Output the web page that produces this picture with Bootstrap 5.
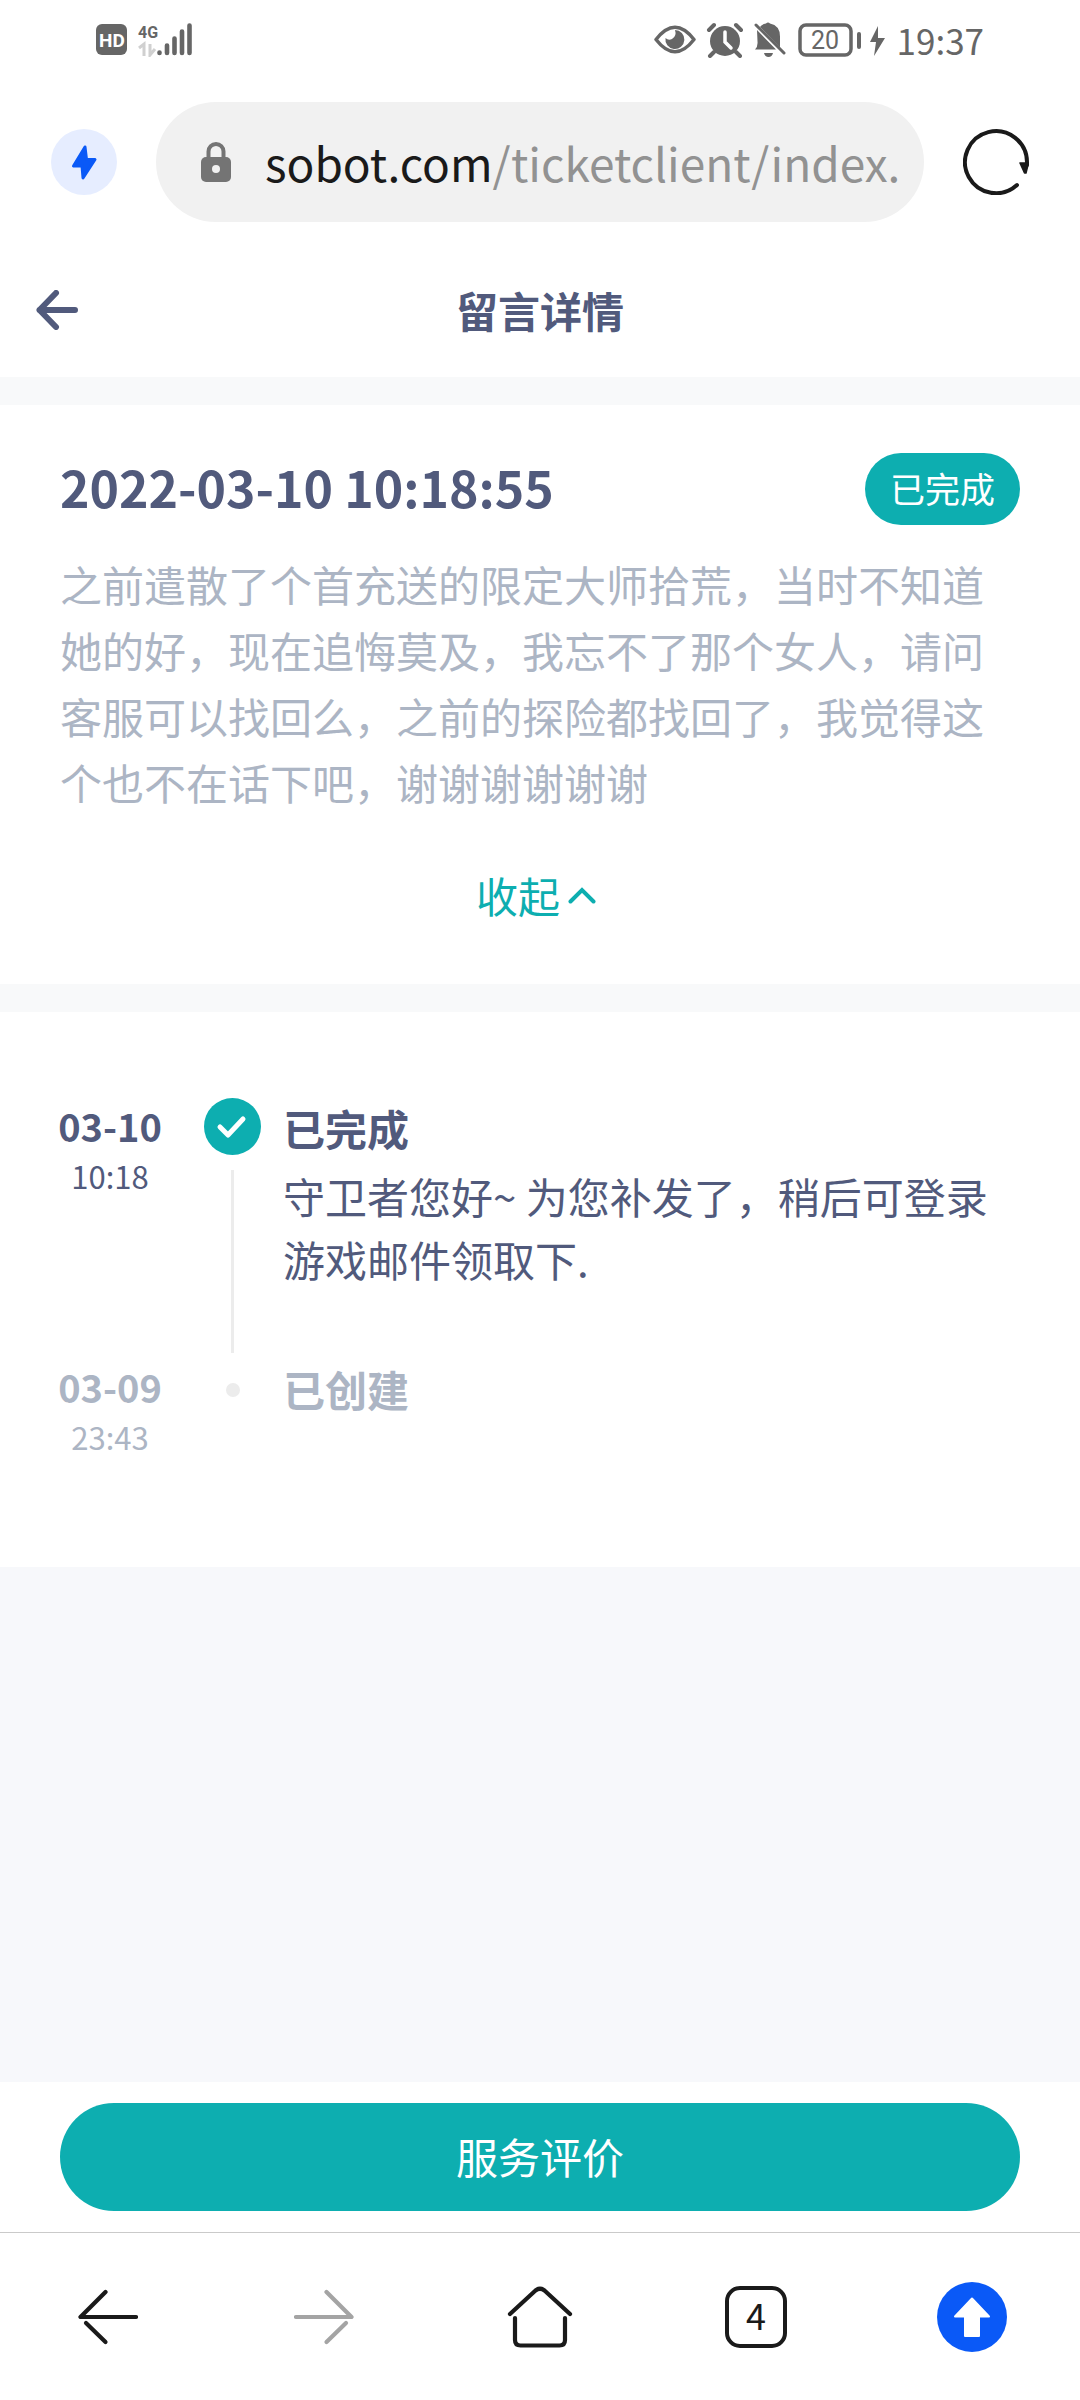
<!DOCTYPE html>
<html lang="zh-CN">
<head>
<meta charset="utf-8">
<meta name="viewport" content="width=device-width, initial-scale=1">
<title>留言详情</title>
<link href="https://cdn.jsdelivr.net/npm/bootstrap@5.3.0/dist/css/bootstrap.min.css" rel="stylesheet">
<style>
  :root { --ink: #515a7c; --muted: #acb5c4; --teal: #0daeb0; --chrome: #666; --band: #f8f9fa; }
  body { font-family: "Noto Sans CJK SC", "Noto Sans", sans-serif; font-size: 42px; line-height: 66px; color: var(--ink); }
  svg { display: block; flex-shrink: 0; }
  .btn { --bs-btn-padding-x: 0; --bs-btn-padding-y: 0; --bs-btn-border-width: 0; --bs-btn-font-size: 42px; --bs-btn-line-height: 66px; }
  .gutter { padding-left: 60px; padding-right: 60px; }
  .muted { color: var(--muted); }

  .status-bar { height: 80px; padding: 0 96px; color: var(--chrome); }
  .status-time { font-size: 35px; line-height: 44px; margin-left: 10px; }
  .address-bar { gap: 39px; padding: 22px 51px 23px; }
  .url-pill { height: 120px; background: #f1f1f1; padding: 0 20px 0 45px; gap: 34px; font-size: 46px; }
  .url-pill:hover { background: #f1f1f1; }
  .url-path { color: #929292; }
  .url-host { color: #1a1a1a; }

  .title-bar { padding: 32px 36px 34px; }
  .title-bar h1 { font-size: 42px; line-height: 66px; }
  .side-slot { width: 42px; }
  .band { height: 28px; background: var(--band); }

  .ticket { padding-top: 48px; padding-bottom: 56px; }
  .ticket h2 { font-size: 50px; line-height: 66px; }
  .state-pill { background: var(--teal); font-size: 35px; line-height: 70px; padding: 0 25px 2px; font-weight: 400; }
  .ticket-text { margin: 26px 0 47px; }
  .toggle-btn, .toggle-btn:hover { color: var(--teal); gap: 8px; }

  .timeline { padding: 86px 60px 108px 57px; }
  .when { width: 106px; margin-right: 41px; white-space: nowrap; }
  .when-date { font-size: 38px; line-height: 56px; }
  .when-time { font-size: 31px; line-height: 44px; }
  .rail { width: 57px; margin-right: 22px; }
  .rail-line { width: 3px; background: #ececec; margin: 15px 0 6px; }
  .rail-dot { width: 14px; height: 14px; background: #ececec; margin-top: 24px; }
  .step-title { font-size: 42px; line-height: 60px; margin-bottom: 6px; }
  .step-text { line-height: 63px; padding-bottom: 69px; }

  .filler { background: #f7f8fb; }
  .action-bar { padding-top: 21px; padding-bottom: 21px; }
  .rate-btn, .rate-btn:hover { background: var(--teal); color: #fff; height: 108px; padding-bottom: 2px; }
  .browser-nav { height: 168px; border-top: 1px solid #cacaca; }
</style>
</head>
<body class="bg-white">
<div class="d-flex flex-column min-vh-100">

  <div class="status-bar d-flex align-items-center justify-content-between">
    <svg width="98" height="34" viewBox="0 0 98 34" role="img" aria-label="HD 4G">
      <rect x="0" y="1" width="31" height="31" rx="6" fill="#666"/>
      <text x="16" y="24" text-anchor="middle" font-family="Roboto, sans-serif" font-weight="700" font-size="19" fill="#fff">HD</text>
      <text x="42" y="15" font-family="Roboto, sans-serif" font-weight="700" font-size="16" fill="#666">4G</text>
      <path d="M43 25l5-4v12M54 21v11l5-6" fill="none" stroke="#d0d0d0" stroke-width="3"/>
      <g stroke="#666" stroke-width="4.600" stroke-linecap="round">
        <path d="M63.500 29.500v.500M71 22.500V30M78.500 15.500V30M86 8.500V30M93.500 2.500V30"/>
      </g>
    </svg>
    <div class="d-flex align-items-center">
      <svg width="233" height="36" viewBox="0 0 233 36" role="img" aria-label="20%">
        <g fill="#666">
          <path d="M2 17.500Q21-7 40 17.500Q21 42 2 17.500Z" fill="none" stroke="#666" stroke-width="3.500" stroke-linejoin="round"/>
          <path d="M21 8a9.500 9.500 0 1 1-9.500 8q3 3 6.500 1q5-3 3-9z"/>
          <circle cx="71" cy="19" r="15"/>
          <path d="M55 8l5-5M87 8l-5-5M60 30l-4 4M82 30l4 4" stroke="#666" stroke-width="4" stroke-linecap="round"/>
          <path d="M71 10v10l6 6" fill="none" stroke="#fff" stroke-width="3.500" stroke-linecap="round"/>
          <path d="M106 5q2-3 6-3.500q2-2 4 0q10 2 10 13v11L106 5zM103 8l19 19.500H101q3-3 2.500-8zM110 31h9q-1 4-4.500 4t-4.500-4z"/>
          <path d="M102 3l28 28" stroke="#666" stroke-width="3" stroke-linecap="round"/>
          <rect x="146" y="3" width="51" height="30" rx="6" fill="none" stroke="#666" stroke-width="3.500"/>
          <rect x="203" y="10" width="4" height="17" rx="2"/>
          <path d="M224 4l-8 16h6l-2 14 11-18h-7z"/>
        </g>
        <text x="171" y="27" text-anchor="middle" font-family="Roboto, sans-serif" font-size="25" fill="#666">20</text>
      </svg>
      <span class="status-time">19:37</span>
    </div>
  </div>

  <div class="address-bar d-flex align-items-center">
    <button class="btn rounded-circle" type="button" aria-label="加速">
      <svg width="66" height="66" viewBox="0 0 66 66"><circle cx="33" cy="33" r="33" fill="#e6edff"/><path d="M34 18L22.500 37H31l1 12L44 30.500h-8.500z" fill="#0a59f7" stroke="#0a59f7" stroke-width="3" stroke-linejoin="round"/></svg>
    </button>
    <button class="url-pill btn rounded-pill flex-grow-1 d-flex align-items-center text-start overflow-hidden text-nowrap" type="button">
      <svg width="30" height="40" viewBox="0 0 30 40"><rect y="15" width="30" height="25" rx="5" fill="#747474"/><path d="M7.500 18V9.500a7.500 7.500 0 0 1 15 0V18" fill="none" stroke="#747474" stroke-width="4"/><circle cx="15" cy="27" r="4" fill="#f1f1f1"/></svg>
      <span><span class="url-host">sobot.com</span><span class="url-path">/ticketclient/index.</span></span>
    </button>
    <button class="btn rounded-circle" type="button" aria-label="刷新">
      <svg width="66" height="66" viewBox="0 0 66 66"><path d="M64 36V33A31 31 0 1 0 54 56" fill="none" stroke="#1a1a1a" stroke-width="4" stroke-linecap="round"/><path d="M57 34h8.500L63 44h-1.500z" fill="#1a1a1a" stroke="#1a1a1a" stroke-width="1.500" stroke-linejoin="round"/></svg>
    </button>
  </div>

  <header class="title-bar d-flex align-items-center justify-content-between">
    <button class="btn side-slot" type="button" aria-label="返回">
      <svg width="42" height="40" viewBox="0 0 42 40"><path d="M3.500 20H39M20 3L3.500 20 20 37" fill="none" stroke="#515a7c" stroke-width="6" stroke-linecap="round" stroke-linejoin="round"/></svg>
    </button>
    <h1 class="m-0 fw-bold">留言详情</h1>
    <span class="side-slot"></span>
  </header>

  <div class="band"></div>

  <section class="ticket gutter">
    <div class="d-flex align-items-start justify-content-between">
      <h2 class="m-0 fw-bold">2022-03-10 10:18:55</h2>
      <span class="state-pill badge rounded-pill">已完成</span>
    </div>
    <p class="ticket-text muted">之前遣散了个首充送的限定大师拾荒，当时不知道她的好，现在追悔莫及，我忘不了那个女人，请问客服可以找回么，之前的探险都找回了，我觉得这个也不在话下吧，谢谢谢谢谢谢</p>
    <button class="toggle-btn btn d-flex align-items-center mx-auto" type="button">收起
      <svg width="36" height="18" viewBox="0 0 36 18"><path d="M2.500 15.500L14 4l11.500 11.500" fill="none" stroke="#0daeb0" stroke-width="4" stroke-linecap="round"/></svg>
    </button>
  </section>

  <div class="band"></div>

  <section class="timeline">
    <div class="d-flex">
      <div class="when flex-shrink-0 text-center">
        <div class="when-date fw-bold">03-10</div>
        <div class="when-time">10:18</div>
      </div>
      <div class="rail flex-shrink-0 d-flex flex-column align-items-center">
        <svg width="57" height="57" viewBox="0 0 57 57"><circle cx="28.500" cy="28.500" r="28.500" fill="#0daeb0"/><path d="M16 29l8 8 15-16" fill="none" stroke="#fff" stroke-width="5" stroke-linecap="round" stroke-linejoin="round"/></svg>
        <div class="rail-line flex-grow-1"></div>
      </div>
      <div class="flex-grow-1">
        <h3 class="step-title fw-bold">已完成</h3>
        <p class="step-text m-0">守卫者您好~ 为您补发了，稍后可登录游戏邮件领取下.</p>
      </div>
    </div>
    <div class="d-flex muted">
      <div class="when flex-shrink-0 text-center">
        <div class="when-date fw-bold">03-09</div>
        <div class="when-time">23:43</div>
      </div>
      <div class="rail flex-shrink-0 d-flex flex-column align-items-center">
        <div class="rail-dot rounded-circle"></div>
      </div>
      <div class="flex-grow-1">
        <h3 class="step-title fw-bold">已创建</h3>
      </div>
    </div>
  </section>

  <div class="filler flex-grow-1"></div>

  <div class="action-bar gutter">
    <button class="rate-btn btn rounded-pill w-100" type="button">服务评价</button>
  </div>

  <nav class="browser-nav row row-cols-5 g-0 align-items-center">
    <div class="col d-flex justify-content-center"><button class="btn" type="button" aria-label="后退">
      <svg width="60" height="56" viewBox="0 0 60 56" fill="none" stroke="#1a1a1a" stroke-width="4.200" stroke-linecap="round" stroke-linejoin="round"><path d="M27.500 3L2.500 28H58"/><path d="M27.500 53L8 34"/></svg>
    </button></div>
    <div class="col d-flex justify-content-center"><button class="btn" type="button" aria-label="前进">
      <svg width="60" height="56" viewBox="0 0 60 56" fill="none" stroke="#a4a4a4" stroke-width="4.200" stroke-linecap="round" stroke-linejoin="round"><path d="M32.500 3l25 25H2"/><path d="M32.500 53L52 34"/></svg>
    </button></div>
    <div class="col d-flex justify-content-center"><button class="btn" type="button" aria-label="主页">
      <svg width="66" height="62" viewBox="0 0 66 62" fill="none" stroke="#1a1a1a" stroke-width="4.200" stroke-linecap="round" stroke-linejoin="round"><path d="M3 28L28.500 4.500q4.500-3.500 9 0L63 28"/><path d="M8 32v22q0 5.500 5.500 5.500h39q5.500 0 5.500-5.500V32"/></svg>
    </button></div>
    <div class="col d-flex justify-content-center"><button class="btn" type="button" aria-label="标签页 4">
      <svg width="62" height="62" viewBox="0 0 62 62"><rect x="2" y="2" width="58" height="58" rx="13" fill="none" stroke="#1a1a1a" stroke-width="4"/><text x="31" y="44" text-anchor="middle" font-family="Noto Sans CJK SC, sans-serif" font-size="36" fill="#1a1a1a">4</text></svg>
    </button></div>
    <div class="col d-flex justify-content-center"><button class="btn" type="button" aria-label="回到顶部">
      <svg width="70" height="70" viewBox="0 0 70 70"><circle cx="35" cy="35" r="35" fill="#0a59f7"/><path d="M35 16.500L52 34.500H42V54H28V34.500H18z" fill="#fff" stroke="#fff" stroke-width="2" stroke-linejoin="round"/></svg>
    </button></div>
  </nav>
</div>
<script src="https://cdn.jsdelivr.net/npm/bootstrap@5.3.0/dist/js/bootstrap.bundle.min.js"></script>
</body>
</html>
